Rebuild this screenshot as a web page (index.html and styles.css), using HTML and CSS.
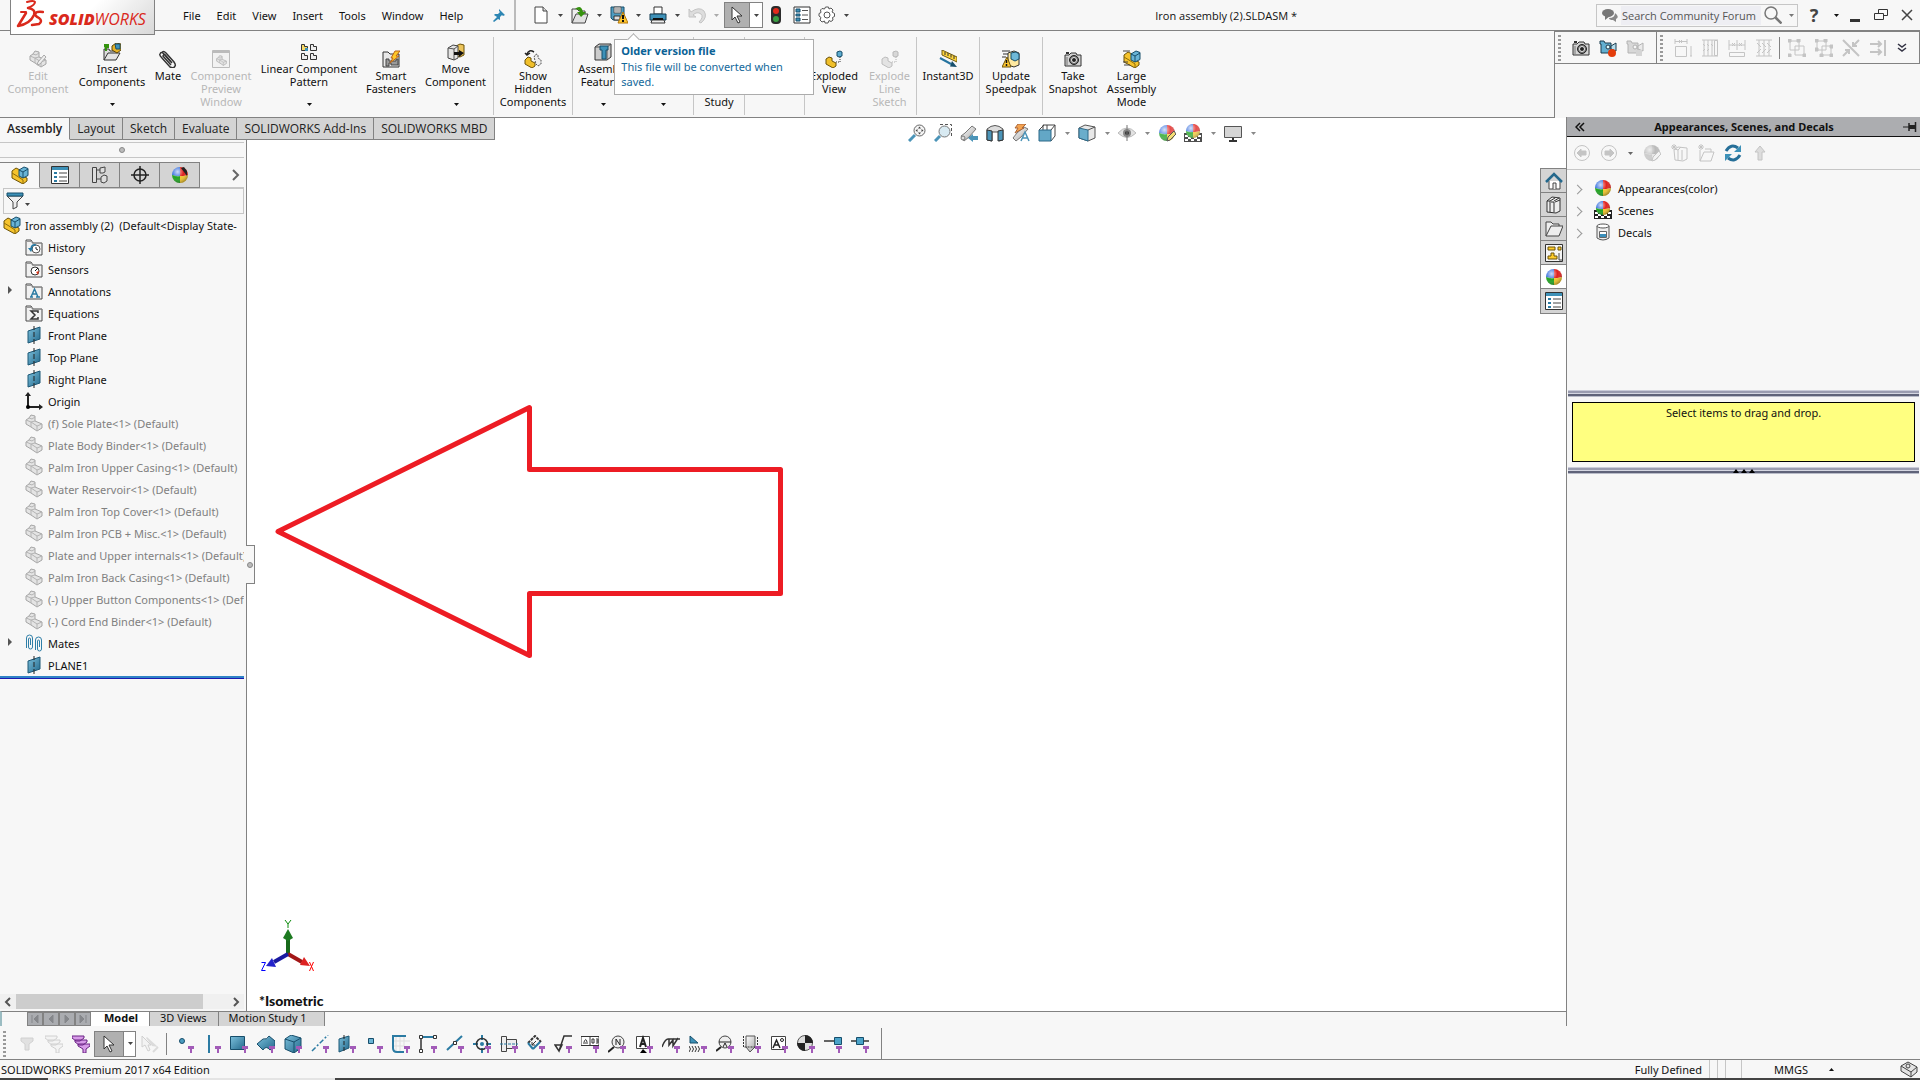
FILE: index.html
```html
<!DOCTYPE html>
<html lang="en">
<head>
<meta charset="utf-8">
<title>Iron assembly (2).SLDASM</title>
<link rel="stylesheet" href="styles.css">
</head>
<body>
<svg class="sprite" aria-hidden="true">
  <defs>
    <linearGradient id="steel" x1="0" y1="0" x2="1" y2="1"><stop offset="0" stop-color="#7cc0dc"/><stop offset="1" stop-color="#23698c"/></linearGradient>
    <linearGradient id="silver" x1="0" y1="0" x2="1" y2="1"><stop offset="0" stop-color="#fff"/><stop offset="1" stop-color="#a8a8a8"/></linearGradient>
    <radialGradient id="shine" cx=".35" cy=".3" r=".75"><stop offset="0" stop-color="#fff" stop-opacity=".75"/><stop offset=".5" stop-color="#fff" stop-opacity="0"/><stop offset="1" stop-color="#000" stop-opacity=".35"/></radialGradient>
  </defs>
  <symbol id="caret" viewBox="0 0 5 3"><path d="M0 0h5L2.500 3z" fill="currentColor"/></symbol>
  <symbol id="funnel" viewBox="0 0 18 18"><path d="M12 11h6v3h-2v4h-2v-4h-2z" fill="#a25bb8"/></symbol>
  <symbol id="ball" viewBox="0 0 18 18"><path d="M9 1a8 8 0 0 0-8 8q4 1.500 8 1z" fill="#3b72e0"/><path d="M9 1a8 8 0 0 1 8 8q-4 1.500-8 1z" fill="#e0221f"/><path d="M1 9a8 8 0 0 0 8 8v-7q-4 .5-8-1z" fill="#22a322"/><path d="M17 9a8 8 0 0 1-8 8v-7q4 .5 8-1z" fill="#f2c52b"/><circle cx="9" cy="9" r="8" fill="url(#shine)"/></symbol>
  <symbol id="scene" viewBox="0 0 18 18"><path d="M0 9h18v9H0z" fill="#222"/><path d="M1 11h3v2H1zM4 13h3v2H4zM1 15h3v2H1zM7 15h3v2H7zM10 13h3v2h-3zM14 11h3v2h-3zM13 15h3v2h-3z" fill="#fff"/><svg x="1" y="-1" width="16" height="16" viewBox="0 0 18 18"><use href="#ball"/></svg></symbol>
  <symbol id="assembly" viewBox="0 0 18 18"><path d="M1 5l4-3 4 2v5l7 3v3l-4 3-11-6z" fill="#f5c32c" stroke="#6b5208" stroke-linejoin="round"/><path d="M1 7l5 3 6 4v4" fill="none" stroke="#8e6c08"/><path d="M8 4l5-3 4 1.500v7L12 12 8 10z" fill="#69b4d6" stroke="#174e6b" stroke-linejoin="round"/><path d="M8 4l4 2 5-3M12 6v6" fill="none" stroke="#174e6b"/></symbol>
  <symbol id="part" viewBox="0 0 18 18"><path d="M1 6l3-2 2-3 4 1v5l7 3v4l-5 3-6-4-5-3z" fill="#e4e4e4" stroke="#a5a5a5" stroke-linejoin="round"/><path d="M1 6l5 2 4-1M6 8v5M12 17v-5l5-2M12 12l-6-4M4 4l3 1 3-2" fill="none" stroke="#b4b4b4"/></symbol>
  <symbol id="plane" viewBox="0 0 18 18"><path d="M3 5l12-4v12L3 17z" fill="url(#steel)" stroke="#1d5877"/><path d="M9 0v4M9 6v5M9 13v5" stroke="#222"/></symbol>
  <symbol id="folder" viewBox="0 0 18 18"><path d="M1 17V2h5l2 3h9v12z" fill="#f1f1f1" stroke="#4b4b4b"/><path d="M1.500 3.500h5l1 2h9" fill="none" stroke="#999"/></symbol>
  <symbol id="cursor" viewBox="0 0 18 18"><path d="M4 1v13l3-3 3 6 2-1-3-6h5z" fill="#fff" stroke="#333" stroke-linejoin="round"/></symbol>
  <symbol id="camera" viewBox="0 0 18 18"><path d="M1 5h4l2-2h5l1 2h4v11H1z" fill="#d5d5d5" stroke="#333"/><path d="M2 3h3" stroke="#333" stroke-width="2"/><circle cx="10" cy="10" r="4.500" fill="#777" stroke="#222"/><circle cx="10" cy="10" r="2.500" fill="#222" stroke="#eee"/><path d="M3 7v8" stroke="#777"/></symbol>
  <symbol id="exploded" viewBox="0 0 18 18"><path d="M1 9l3-2 3 1v3l4 2v3l-3 2-7-4z" fill="#f0bf2b" stroke="#6b5208" stroke-linejoin="round"/><path d="M12 2l3-1 2 1v4l-3 1-2-1z" fill="#5dacd0" stroke="#174e6b"/><path d="M15 7v5h-5" fill="none" stroke="#333" stroke-dasharray="1 1"/></symbol>
  <symbol id="video" viewBox="0 0 18 18"><path d="M1 2h4l1 2h6v10H2V5H1z" fill="#62afd0" stroke="#1b3d4e"/><path d="M12 7l5-3v8l-5-2z" fill="#b4dcec" stroke="#1b3d4e"/><circle cx="9" cy="8" r="2" fill="#dff" stroke="#234"/></symbol>
</svg>

<header class="titlebar">
  <a class="logo" href="#" aria-label="SOLIDWORKS home">
    <svg width="28" height="28" viewBox="0 0 28 28" fill="none" stroke="#da291c" stroke-linecap="round" stroke-linejoin="round"><path d="M11 2q7-2 8 0 0 3-7 6" stroke-width="2"/><path d="M12 8q8 1 6 7Q14 24 2 26L10 13" stroke-width="2.500"/><path d="M5 12h5" stroke-width="2"/><path d="M27 12q-7-1-8 2 0 2 4 4 4 3 0 6l-7 1" stroke-width="2.500"/></svg>
    <span class="wordmark"><b>SOLID</b>WORKS</span>
  </a>
  <nav class="menu"><a href="#">File</a><a href="#">Edit</a><a href="#">View</a><a href="#">Insert</a><a href="#">Tools</a><a href="#">Window</a><a href="#">Help</a></nav>
  <button class="pin" aria-label="Pin menu"><svg width="14" height="14" viewBox="0 0 14 14"><path d="M7 1l6 6-2 1-1-1-2 2v3L6 11l-4 3-1-1 4-4-3-2 1-1h3l2-2-1-1z" fill="#2d86b3"/></svg></button>
  <div class="quick">
    <div class="split"><button aria-label="New"><svg class="ico" viewBox="0 0 18 18"><path d="M3 1h8l4 4v12H3z" fill="#fff" stroke="#444"/><path d="M11 1v4h4" fill="#ddd" stroke="#444"/></svg></button><button class="drop" aria-label="New options"><svg><use href="#caret"/></svg></button></div>
    <div class="split"><button aria-label="Open"><svg class="ico" viewBox="0 0 18 18"><path d="M1 17V3h5l2 2h6v3" fill="#eee" stroke="#444"/><path d="M1 17L5 8h12l-3 9z" fill="#e1e1e1" stroke="#444"/><path d="M4 3q6-5 8 3h3l-5 5-4-5h3q-1-3-5-3z" fill="#35920d"/></svg></button><button class="drop" aria-label="Open options"><svg><use href="#caret"/></svg></button></div>
    <div class="split"><button aria-label="Save"><svg class="ico" viewBox="0 0 18 18"><path d="M1 1h13v13H3l-2-2z" fill="#4d9cc1" stroke="#174f6c"/><path d="M4 1h7v6H4z" fill="#eee" stroke="#555"/><path d="M5 3h5M5 5h5" stroke="#777"/><path d="M4 10h6v4H4z" fill="#ddd" stroke="#333"/><path d="M13 6l5 11H8z" fill="#ffc72e" stroke="#b57707"/><path d="M13 9v4m0 1v2" stroke="#111" stroke-width="2"/></svg></button><button class="drop" aria-label="Save options"><svg><use href="#caret"/></svg></button>
      <div class="tooltip" role="tooltip"><strong>Older version file</strong><p>This file will be converted when saved.</p></div>
    </div>
    <div class="split"><button aria-label="Print"><svg class="ico" viewBox="0 0 18 18"><path d="M5 1h8v7H5z" fill="#fff" stroke="#333"/><path d="M1 8h16v6H1z" fill="#3e91b8" stroke="#123b50"/><path d="M3 14h12l1 3H2z" fill="#eee" stroke="#333"/><path d="M4 13h10" stroke="#111" stroke-width="2"/></svg></button><button class="drop" aria-label="Print options"><svg><use href="#caret"/></svg></button></div>
    <div class="split off"><button aria-label="Undo" disabled><svg class="ico" viewBox="0 0 18 18"><path d="M1 3l2 3q8-6 13-1 4 6-3 12l-2-1q5-5 2-8-4-3-8 1l3 2H1z" fill="#ddd" stroke="#c4c4c4"/></svg></button><button class="drop" aria-label="Undo options" disabled><svg><use href="#caret"/></svg></button></div>
    <div class="split pressed"><button aria-label="Select"><svg class="ico" viewBox="0 0 18 18"><use href="#cursor"/></svg></button><button class="drop" aria-label="Select options"><svg><use href="#caret"/></svg></button></div>
    <button class="tool" aria-label="Rebuild"><svg class="ico" viewBox="0 0 18 18"><rect x="4" y="0" width="10" height="18" rx="4" fill="#2b2b2b"/><circle cx="9" cy="5" r="3" fill="#e32a1c"/><circle cx="9" cy="13" r="3" fill="#3a9f43"/></svg></button>
    <button class="tool" aria-label="File properties"><svg class="ico" viewBox="0 0 18 18"><path d="M1 1h16v16H1z" fill="#fff" stroke="#333"/><path d="M3 3h4v3H3zM3 8h4v2H3zM3 12h4v3H3z" fill="#3a8fb8" stroke="#174f6c"/><path d="M9 4.500h6M9 9h6M9 13.500h6" stroke="#555"/></svg></button>
    <div class="split"><button aria-label="Options"><svg class="ico" viewBox="0 0 18 18" fill="#fff" stroke="#555"><path d="M7.500 1h3l.5 2 2-1 2 2-1 2 2.500 1.500v3L14.500 11.500l.5 2.500-2 1.500-2-1L10 17H7l-.5-2-2.500 1-2-2 1-2.500L1 10V7.500L3 6.500 2.500 4 4 2.500 6.500 3z"/><circle cx="9" cy="9" r="3"/></svg></button><button class="drop" aria-label="Options list"><svg><use href="#caret"/></svg></button></div>
  </div>
  <h1 class="doc-title">Iron assembly (2).SLDASM *</h1>
  <div class="search">
    <svg class="bubble" viewBox="0 0 16 14"><ellipse cx="6" cy="5" rx="6" ry="4" fill="#777"/><path d="M3 7v5l5-4z" fill="#777"/><path d="M13 5q5 4 1 6v3l-3-2q-4 0-4-2 6 0 6-5z" fill="#888"/></svg>
    <input type="text" aria-label="Search Community Forum" placeholder="Search Community Forum">
    <button aria-label="Search"><svg class="ico" viewBox="0 0 18 18" fill="none" stroke="#777"><circle cx="7" cy="7" r="6" stroke-width="1.500"/><path d="M11.500 11.500l6 6" stroke-width="2.500"/></svg></button>
    <button class="drop" aria-label="Search options"><svg><use href="#caret"/></svg></button>
  </div>
  <div class="window-tools">
    <button class="help" aria-label="Help">?</button><button class="drop" aria-label="Help options"><svg><use href="#caret"/></svg></button>
    <button aria-label="Minimize"><svg viewBox="0 0 14 14"><path d="M2 11h10v3H2z" fill="#333"/></svg></button>
    <button aria-label="Restore"><svg viewBox="0 0 14 14" fill="#f7f7f7" stroke="#333"><path d="M4.500 1.500h9v6h-9z"/><path d="M.5 5.500h9v6h-9z"/></svg></button>
    <button aria-label="Close"><svg viewBox="0 0 14 14"><path d="M2 2l10 10M12 2L2 12" stroke="#444" stroke-width="1.500"/></svg></button>
  </div>
</header>

<div class="commands">
  <div class="ribbon">
    <div class="group g-components">
      <button class="cmd" disabled><svg viewBox="0 0 18 18"><use href="#part"/><path d="M8 15l1-3 6-7 2 2-6 7z" fill="#eee" stroke="#aaa"/></svg><span>Edit<br>Component</span></button>
      <button class="cmd menu-cmd"><svg viewBox="0 0 18 18"><path d="M1 17V6h5l1 2h7v2" fill="#ddd" stroke="#333"/><path d="M1 17l4-7h12l-4 7z" fill="#e4e4e4" stroke="#333"/><path d="M2 8V5l-1-1V1h5v4H4v3z" fill="#34930e"/><path d="M9 3l4-3 5 1v6l-4 3-5-3z" fill="#e5b125" stroke="#5c4508"/><path d="M12 1h5v5h-4z" fill="#3f93ba" stroke="#174e6b"/></svg><span>Insert<br>Components</span><svg class="caret"><use href="#caret"/></svg></button>
      <button class="cmd"><svg viewBox="0 0 18 18" fill="none" stroke="#333" stroke-width="1.500"><path d="M13 13L5 4Q2 1 1 4q-1 1 2 4l8 9q4 2 5-1 1-1-1-4L7 3Q4 0 3 3"/><path d="M12 15L4 6q1-3 3 0l5 6"/></svg><span>Mate</span></button>
      <button class="cmd" disabled><svg viewBox="0 0 18 18"><path d="M.5.5h17v17H.5z" fill="#f2f2f2" stroke="#bbb"/><path d="M1 2h16" stroke="#bbb" stroke-width="2"/><svg x="4" y="5" width="11" height="11" viewBox="0 0 18 18"><use href="#part"/></svg></svg><span>Component<br>Preview<br>Window</span></button>
      <button class="cmd menu-cmd"><svg viewBox="0 0 18 18" fill="#eee" stroke="#333"><path d="M1.500 1.500h3v2h3v4h-6z" fill="#f5d967"/><path d="M10.500 1.500h3v2h3v4h-6zM1.500 10.500h3v2h3v4h-6zM10.500 10.500h3v2h3v4h-6z"/><path d="M5 5h3v3H5z" fill="#3c8fb8" stroke="none"/></svg><span>Linear Component<br>Pattern</span><svg class="caret"><use href="#caret"/></svg></button>
      <button class="cmd"><svg viewBox="0 0 18 18"><path d="M1 17V2h5l2 2h9v13z" fill="#e8e8e8" stroke="#333"/><path d="M4 9h3v2h7V9h2v6H9v-2H7v3H4z" fill="#999" stroke="#444"/><path d="M13 1h5l-4 5h3l-9 7 3-5H9z" fill="#ffc928" stroke="#b8621a"/></svg><span>Smart<br>Fasteners</span></button>
      <button class="cmd menu-cmd"><svg viewBox="0 0 18 18"><path d="M9 3l4-2 4 1v10l-4 2-4-1z" fill="#ecc45b" stroke="#6b5208"/><path d="M1 5l5-3 5 1v12l-4 2-6-2z" fill="#e4e4e4" stroke="#444"/><path d="M1 5l6 1 4-3M7 6v11" fill="none" stroke="#555"/><path d="M7 9h5V7l5 3-5 4v-2H7z" fill="#111"/></svg><span>Move<br>Component</span><svg class="caret"><use href="#caret"/></svg></button>
    </div>
    <div class="group g-show">
      <button class="cmd"><svg viewBox="0 0 18 18"><path d="M1 10l3-3 3 1v3l4 2v3l-3 2-7-4z" fill="#f0bf2b" stroke="#6b5208"/><path d="M10 7l2-3 2 1v3l3 2v4l-3 2-2-2z" fill="#eee" stroke="#555" stroke-dasharray="2 1"/><path d="M10 2Q5-1 3 4M1 3l2 2 3-2" fill="none" stroke="#222" stroke-width="1.500"/></svg><span>Show<br>Hidden<br>Components</span></button>
    </div>
    <div class="group g-features">
      <button class="cmd menu-cmd"><svg viewBox="0 0 18 18"><path d="M1 4l4-3h12v13l-4 3H1z" fill="#ccc" stroke="#333"/><path d="M1 4h12v13M13 4l4-3" fill="none" stroke="#555"/><path d="M6 3h8v4h-2v9H8V7H6z" fill="#3d91b8" stroke="#174e6b"/></svg><span>Assembly<br>Features</span><svg class="caret"><use href="#caret"/></svg></button>
      <button class="cmd menu-cmd" aria-label="Reference Geometry"><svg viewBox="0 0 18 18"><use href="#plane"/></svg><svg class="caret"><use href="#caret"/></svg></button>
    </div>
    <div class="group g-study"><button class="cmd third-line" aria-label="New Motion Study"><span>Study</span></button></div>
    <div class="group g-bom"><button class="cmd menu-cmd" aria-label="Bill of Materials"><svg viewBox="0 0 18 18"><path d="M1 1h16v16H1zM1 6h16M1 11h16M6 1v16" fill="#fff" stroke="#444"/></svg></button></div>
    <div class="group g-explode">
      <button class="cmd"><svg viewBox="0 0 18 18"><use href="#exploded"/></svg><span>Exploded<br>View</span></button>
      <button class="cmd" disabled><svg class="grey" viewBox="0 0 18 18"><use href="#exploded"/></svg><span>Explode<br>Line<br>Sketch</span></button>
    </div>
    <div class="group g-single"><button class="cmd"><svg viewBox="0 0 18 18"><path d="M3 0l15 7v5L3 5z" fill="#ffd63c" stroke="#705a10"/><path d="M6 2v3M9 3v3M12 4.500v3M15 6v3" stroke="#333"/><path d="M1 8l11 6" stroke="#2674a0" stroke-width="2"/><path d="M13 11l5 6-7-.5z" fill="#174e6b"/></svg><span>Instant3D</span></button></div>
    <div class="group g-single"><button class="cmd"><svg viewBox="0 0 18 18"><path d="M6 3l6-2 5 2v12l-5 2-6-2z" fill="#ffe9a0" stroke="#333"/><path d="M9 3l5-1 3 2v5l-4 2-4-2z" fill="#6fb9d8" stroke="#174e6b"/><path d="M0 1h8M1 4h5M0 7h4" stroke="#333"/><path d="M5 7l4 10H0z" fill="#ffc72e" stroke="#6b5208"/><path d="M4.500 10v3m0 1v2" stroke="#111" stroke-width="1.500"/></svg><span>Update<br>Speedpak</span></button></div>
    <div class="group g-snapshot">
      <button class="cmd"><svg viewBox="0 0 18 18"><use href="#camera"/></svg><span>Take<br>Snapshot</span></button>
      <button class="cmd"><svg viewBox="0 0 18 18"><use href="#assembly"/><path d="M0 1h7M0 12h5M1 15h6" stroke="#444"/></svg><span>Large<br>Assembly<br>Mode</span></button>
    </div>
  </div>
  <div class="side-bars">
    <div class="bar bar-capture"><i class="grip"></i>
      <button aria-label="Screen capture"><svg class="ico" viewBox="0 0 18 18"><use href="#camera"/></svg></button>
      <button aria-label="Record video"><svg class="ico" viewBox="0 0 18 18"><use href="#video"/><circle cx="13" cy="14" r="4" fill="#e43d0c"/></svg></button>
      <button aria-label="Stop video" disabled><svg class="ico grey" viewBox="0 0 18 18"><use href="#video"/><path d="M10 11h6v6h-6z" fill="#999"/></svg></button>
    </div>
    <div class="bar bar-align"><i class="grip"></i>
      <button aria-label="Auto arrange" disabled><svg class="ico line" viewBox="0 0 18 18"><path d="M1.500 7.500h11v10h-11zM1 2.500h12M1 0v5M13 0v5M16 8h2M16 17h2M17 9v8" /><path d="M5 1l3 3M8 1L5 4"/></svg></button>
      <button aria-label="Space evenly" disabled><svg class="ico line" viewBox="0 0 18 18"><path d="M1 1h16M1 17h16M3 1v16M7 1v16M11 1v16M13.500 1.500h3v15h-3zM2 5l2 2M6 5l2 2M10 5l2 2M2 12l2-2M6 12l2-2"/></svg></button>
      <button aria-label="Align collinear" disabled><svg class="ico line" viewBox="0 0 18 18"><path d="M1 1v10M9 1v10M17 1v10M1 6h16M1.500 13.500h15v4h-15zM4 4l3 3M7 4L4 7M11 4l3 3M14 4l-3 3"/></svg></button>
      <button aria-label="Align stagger" disabled><svg class="ico line" viewBox="0 0 18 18"><path d="M1 1h16M1 17h16M4 1v16M9 1v16M14 1v16M2 4l4 4M7 4l4 4M12 4l4 4M2 14l4-4M7 14l4-4M12 14l4-4"/></svg></button>
      <i class="divider"></i>
      <button aria-label="Group" disabled><svg class="ico line" viewBox="0 0 18 18"><path d="M2 2h9v9H2zM7 7h9v9H7z"/><path d="M0 0h3v3H0zM9 0h3v3H9zM0 15h3v3H0zM15 15h3v3h-3z" fill="#c4c4c4"/></svg></button>
      <button aria-label="Ungroup" disabled><svg class="ico line" viewBox="0 0 18 18"><path d="M2 2h9v9H2zM7 7h9v9H7z"/><path d="M0 0h3v3H0zM9 0h3v3H9zM0 9h3v3H0zM5 15h3v3H5zM15 6h3v3h-3zM15 15h3v3h-3z" fill="#c4c4c4"/></svg></button>
      <button aria-label="Align to line" disabled><svg class="ico line" viewBox="0 0 18 18"><path d="M1 1l16 16M17 1l-6 6M11 3v4h4M1 17l6-6M3 11h4v4" stroke-width="2"/></svg></button>
      <button aria-label="Align right" disabled><svg class="ico line" viewBox="0 0 18 18"><path d="M16 1v16M1 5h10M9 2l3 3-3 3M1 13h10M9 10l3 3-3 3" stroke-width="2"/></svg></button>
      <button class="more" aria-label="More tools"><svg viewBox="0 0 10 10" fill="none" stroke="#334" stroke-width="1.500"><path d="M1 1l4 3 4-3M1 5l4 3 4-3"/></svg></button>
    </div>
  </div>
</div>

<div class="workspace">
  <main class="document">
    <nav class="cm-tabs"><button class="on">Assembly</button><button>Layout</button><button>Sketch</button><button>Evaluate</button><button>SOLIDWORKS Add-Ins</button><button>SOLIDWORKS MBD</button></nav>
    <div class="stage">
      <aside class="manager">
        <div class="flyout-bar"><i class="knob"></i></div>
        <div class="pane-tabs">
          <button class="on" aria-label="Feature tree"><svg class="ico" viewBox="0 0 18 18"><use href="#assembly"/></svg></button>
          <button aria-label="Properties"><svg class="ico" viewBox="0 0 18 18"><path d="M.5.5h17v17H.5z" fill="#fff" stroke="#333"/><path d="M1 1h16v3H1z" fill="#3d91b8"/><path d="M3 6h3v2H3zM3 10h3v2H3zM3 14h3v2H3z" fill="#2b7ba3"/><path d="M8 7h8M8 11h8M8 15h8" stroke="#444"/></svg></button>
          <button aria-label="Configurations"><svg class="ico" viewBox="0 0 18 18" fill="#ddd" stroke="#444"><path d="M3 4h7M3 13h7" fill="none"/><path d="M1.500 1.500h4v15h-4zM9 2l5-1v5l-2 1H9zM10 11l3-2 3 1v5l-3 2-3-1z"/></svg></button>
          <button aria-label="Dimensions"><svg class="ico" viewBox="0 0 18 18" fill="none" stroke="#222" stroke-width="1.500"><circle cx="9" cy="9" r="6"/><path d="M9 0v18M0 9h18"/></svg></button>
          <button aria-label="Display"><svg class="ico" viewBox="0 0 18 18"><use href="#ball"/><path d="M10 2l3-1 3 4v5z" fill="#222"/></svg></button>
          <button class="next" aria-label="More panes"><svg width="8" height="12" viewBox="0 0 8 12"><path d="M1 1l5 5-5 5" fill="none" stroke="#666" stroke-width="2"/></svg></button>
        </div>
        <div class="filter"><svg class="ico" viewBox="0 0 18 18"><path d="M1 4l6 6v7l4-2v-5l6-6z" fill="#eee" stroke="#444"/><path d="M1 1h16v3H1z" fill="#3d91b8" stroke="#174e6b"/></svg><svg class="caret"><use href="#caret"/></svg><input type="text" aria-label="Filter tree"></div>
        <ul class="tree">
          <li class="root"><svg class="ico"><use href="#assembly"/></svg>Iron assembly (2)&nbsp; (Default&lt;Display State-</li>
          <li><svg class="ico" viewBox="0 0 18 18"><use href="#folder"/><circle cx="11" cy="11" r="4" fill="#fff" stroke="#555"/><path d="M11 9v2l2 1" fill="none" stroke="#222"/><path d="M3 10h5l-2 4z" fill="#247aa5"/><path d="M6 10q1-4 5-3" fill="none" stroke="#247aa5" stroke-width="1.500"/></svg>History</li>
          <li><svg class="ico" viewBox="0 0 18 18"><use href="#folder"/><circle cx="10" cy="11" r="4" fill="#fff" stroke="#333"/><path d="M10 11l3-3" stroke="#111"/><path d="M11 12l3-1-1 4z" fill="#e33b1c"/></svg>Sensors</li>
          <li class="parent"><svg class="ico" viewBox="0 0 18 18"><use href="#folder"/><path d="M6 15l3.500-8 3.500 8M7 12h5M5 15h3M11 15h4" fill="none" stroke="#2b7ba3" stroke-width="1.500"/></svg>Annotations</li>
          <li><svg class="ico" viewBox="0 0 18 18"><use href="#folder"/><path d="M13 9V7H6l4 4-4 4h7v-2" fill="none" stroke="#333" stroke-width="1.500"/></svg>Equations</li>
          <li><svg class="ico"><use href="#plane"/></svg>Front Plane</li>
          <li><svg class="ico"><use href="#plane"/></svg>Top Plane</li>
          <li><svg class="ico"><use href="#plane"/></svg>Right Plane</li>
          <li><svg class="ico" viewBox="0 0 18 18"><path d="M3 3v12h12" fill="none" stroke="#222" stroke-width="2"/><path d="M0 4l3-4 3 4zM14 12l4 3-4 3z" fill="#222"/><circle cx="3" cy="15" r="2"/></svg>Origin</li>
          <li class="hidden-part"><svg class="ico"><use href="#part"/></svg>(f) Sole Plate&lt;1&gt; (Default)</li>
          <li class="hidden-part"><svg class="ico"><use href="#part"/></svg>Plate Body Binder&lt;1&gt; (Default)</li>
          <li class="hidden-part"><svg class="ico"><use href="#part"/></svg>Palm Iron Upper Casing&lt;1&gt; (Default)</li>
          <li class="hidden-part"><svg class="ico"><use href="#part"/></svg>Water Reservoir&lt;1&gt; (Default)</li>
          <li class="hidden-part"><svg class="ico"><use href="#part"/></svg>Palm Iron Top Cover&lt;1&gt; (Default)</li>
          <li class="hidden-part"><svg class="ico"><use href="#part"/></svg>Palm Iron PCB + Misc.&lt;1&gt; (Default)</li>
          <li class="hidden-part"><svg class="ico"><use href="#part"/></svg>Plate and Upper internals&lt;1&gt; (Default)</li>
          <li class="hidden-part"><svg class="ico"><use href="#part"/></svg>Palm Iron Back Casing&lt;1&gt; (Default)</li>
          <li class="hidden-part"><svg class="ico"><use href="#part"/></svg>(-) Upper Button Components&lt;1&gt; (Default)</li>
          <li class="hidden-part"><svg class="ico"><use href="#part"/></svg>(-) Cord End Binder&lt;1&gt; (Default)</li>
          <li class="parent"><svg class="ico" viewBox="0 0 18 18" fill="none" stroke="#2f7fa8"><path d="M1.500 14V4q0-3 3-3t3 3v9q0 2-2 2t-2-2V5q0-1 1-1t1 1v6M10.500 16V6q0-3 3-3t3 3v9q0 2-2 2t-2-2V7q0-1 1-1t1 1v6"/></svg>Mates</li>
          <li><svg class="ico"><use href="#plane"/></svg>PLANE1</li>
        </ul>
        <div class="rollback"></div>
        <div class="hscroll"><button aria-label="Scroll left"><svg viewBox="0 0 8 10"><path d="M6 1L2 5l4 4" fill="none" stroke="#555" stroke-width="2"/></svg></button><span class="track"><i class="thumb"></i></span><button aria-label="Scroll right"><svg viewBox="0 0 8 10"><path d="M2 1l4 4-4 4" fill="none" stroke="#555" stroke-width="2"/></svg></button></div>
      </aside>
      <section class="canvas" aria-label="Graphics area">
        <button class="collapse" aria-label="Collapse tree"><i class="knob"></i></button>
        <div class="headsup">
          <button aria-label="Zoom to fit"><svg class="ico" viewBox="0 0 18 18"><path d="M1 17l6-6" stroke="#4b94b8" stroke-width="3"/><circle cx="11.500" cy="6.500" r="5.500" fill="#f4f4f4" stroke="#666"/><path d="M10 4.500l1.500-2 1.500 2zM10 8.500l1.500 2 1.500-2zM9.500 5l-2 1.500 2 1.500zM13.500 5l2 1.500-2 1.500z" fill="#444"/></svg></button>
          <button aria-label="Zoom to area"><svg class="ico" viewBox="0 0 18 18"><path d="M6 .5h11.500v12" fill="none" stroke="#555" stroke-dasharray="3 2"/><path d="M1 17l5-5" stroke="#4b94b8" stroke-width="3"/><circle cx="10.500" cy="7.500" r="5.500" fill="#d8eaf2" stroke="#777"/></svg></button>
          <button aria-label="Previous view"><svg class="ico" viewBox="0 0 18 18"><path d="M1 12l4-3 7-7 4 3-7 8-5 4z" fill="url(#silver)" stroke="#777"/><circle cx="3" cy="14" r="2" fill="#ddd" stroke="#777"/><path d="M8 14l5-4v2h5v4h-5v2z" fill="#4b94b8"/></svg></button>
          <button aria-label="Section view"><svg class="ico" viewBox="0 0 18 18"><path d="M1 5q8-7 16 0v11l-4 1V8H6v9l-5-1z" fill="#ddd" stroke="#555"/><path d="M1 6l5 1v10l-5-1zM12 7l5-1v10l-5 1z" fill="#4b94b8" stroke="#333"/></svg></button>
          <button aria-label="Dynamic annotation views"><svg class="ico" viewBox="0 0 18 18"><path d="M1 14l4-5 7-6 4 2-7 8-5 4z" fill="url(#silver)" stroke="#777"/><path d="M6 0h8l-4 4h2L3 9l3-5H3z" fill="#f4a350" stroke="#a96538"/><path d="M9 17l4-9 4 9M10 14h6" fill="none" stroke="#4b94b8" stroke-width="1.500"/></svg></button>
          <div class="pair"><button aria-label="View orientation"><svg class="ico" viewBox="0 0 18 18"><path d="M5 1h12v11M1 6l5-5M13 6l4-5M13 17l4-5M5 1v5M9 1v5" fill="none" stroke="#444"/><path d="M1 6h12v11H1z" fill="#63a7c6" stroke="#2d6988"/></svg></button><button class="drop" aria-label="Orientation list"><svg><use href="#caret"/></svg></button></div>
          <div class="pair"><button aria-label="Display style"><svg class="ico" viewBox="0 0 18 18"><path d="M1 4l6-3 10 2v11l-7 3-9-3z" fill="#e8e8e8" stroke="#555"/><path d="M1 4l9 2v11l-9-3z" fill="#6aadcb" stroke="#2d6988"/><path d="M10 6l7-3" stroke="#555"/></svg></button><button class="drop" aria-label="Display style list"><svg><use href="#caret"/></svg></button></div>
          <div class="pair"><button aria-label="Hide/show items"><svg class="ico" viewBox="0 0 18 18"><path d="M0 9q9-10 18 0-9 9-18 0z" fill="#e2e2e2" stroke="#bbb"/><circle cx="9" cy="9" r="4" fill="#888"/><circle cx="9" cy="9" r="2" fill="#333"/><path d="M9 1v16" stroke="#777"/></svg></button><button class="drop" aria-label="Hide/show list"><svg><use href="#caret"/></svg></button></div>
          <button aria-label="Edit appearance"><svg class="ico" viewBox="0 0 18 18"><use href="#ball" opacity=".8"/><path d="M9 17l1-4 6-6 2 3-6 6z" fill="#f5dd74" stroke="#555"/></svg></button>
          <div class="pair"><button aria-label="Apply scene"><svg class="ico"><use href="#scene" opacity=".8"/></svg></button><button class="drop" aria-label="Scene list"><svg><use href="#caret"/></svg></button></div>
          <div class="pair"><button aria-label="View settings"><svg class="ico" viewBox="0 0 18 18"><path d="M.5 2.500h17v11H.5z" fill="#d5d5d5" stroke="#555"/><path d="M9 14v3M5 17h8" stroke="#333" stroke-width="2"/></svg></button><button class="drop" aria-label="View settings list"><svg><use href="#caret"/></svg></button></div>
        </div>
        <svg class="big-arrow" viewBox="0 0 520 260" aria-hidden="true"><path d="M6 131.500L257.500 7.500v62h251v124h-251v62z" fill="none" stroke="#ed1c24" stroke-width="5" stroke-linejoin="round"/></svg>
        <svg class="triad" viewBox="0 0 60 60" aria-label="Axis triad"><path d="M30 35V17" stroke="#17691a" stroke-width="4"/><path d="M30 10l5 9-5 3-5-3z" fill="#1d7a20"/><path d="M30 35l14 8" stroke="#a31717" stroke-width="4"/><path d="M52 47l-10-1 4-8z" fill="#d22"/><path d="M30 35l-14 8" stroke="#1a1aa0" stroke-width="4"/><path d="M8 47l10 1-4-9z" fill="#22c"/><path d="M27 1l3 4 3-4M30 5v4" fill="none" stroke="#0a8a0a"/><path d="M3.500 43.500h4l-4 8h4" fill="none" stroke="#00f"/><path d="M51.500 43l4 9M55.500 43l-4 9" stroke="#f00"/></svg>
        <p class="view-name">*Isometric</p>
        <nav class="pane-rail">
          <button aria-label="Resources"><svg class="ico" viewBox="0 0 18 18"><path d="M4 9v8h11V9" fill="#fff" stroke="#444"/><path d="M8 17v-6h3v6" fill="#eee" stroke="#444"/><path d="M1 10l8-8 8 8" fill="none" stroke="#24688c" stroke-width="2.500"/></svg></button>
          <button aria-label="Design library"><svg class="ico" viewBox="0 0 18 18" fill="#eee" stroke="#333"><path d="M2 5l5-4 8 1v13l-4 2-9-1zM2 5h3v11M5 5l5-3M6 6h3v10M9 5l5-3M10 6l5-2"/></svg></button>
          <button aria-label="File explorer"><svg class="ico" viewBox="0 0 18 18" fill="#eee" stroke="#444"><path d="M1 16V2h5l2 2h6v3"/><path d="M1 16l5-10h12l-4 10z"/></svg></button>
          <button aria-label="View palette"><svg class="ico" viewBox="0 0 18 18"><path d="M.5.5h17v17H.5z" fill="#f5f5f5" stroke="#333"/><path d="M3 3h7v3H3zM13 3h3v3h-3zM6 9h3v3h3v3H3v-3h3z" fill="#ffcc2a" stroke="#6b5208"/><path d="M14 9v7h3" fill="none" stroke="#444"/></svg></button>
          <button class="on" aria-label="Appearances"><svg class="ico"><use href="#ball"/></svg></button>
          <button aria-label="Custom properties"><svg class="ico" viewBox="0 0 18 18"><path d="M.5.5h17v17H.5z" fill="#fff" stroke="#333"/><path d="M1 1h16v3H1z" fill="#3d91b8"/><path d="M3 6h3v2H3zM3 10h3v2H3zM3 14h3v2H3z" fill="#2b7ba3"/><path d="M8 7h8M8 11h8M8 15h8" stroke="#444"/></svg></button>
        </nav>
      </section>
    </div>
    <div class="model-bar">
      <div class="steps">
        <button aria-label="First tab"><svg viewBox="0 0 10 10"><path d="M2 1v8M8 1L4 5l4 4z"/></svg></button><button aria-label="Previous tab"><svg viewBox="0 0 10 10"><path d="M7 1L3 5l4 4z"/></svg></button><button aria-label="Next tab"><svg viewBox="0 0 10 10"><path d="M3 1l4 4-4 4z"/></svg></button><button aria-label="Last tab"><svg viewBox="0 0 10 10"><path d="M8 1v8M2 1l4 4-4 4z"/></svg></button>
      </div>
      <button class="on">Model</button><button>3D Views</button><button>Motion Study 1</button>
    </div>
  </main>

  <aside class="task-pane">
    <header><button aria-label="Collapse pane"><svg width="10" height="10" viewBox="0 0 10 10"><path d="M5 1L1 5l4 4M9 1L5 5l4 4" fill="none" stroke="#111" stroke-width="1.500"/></svg></button><h2>Appearances, Scenes, and Decals</h2><button aria-label="Pin pane"><svg width="14" height="10" viewBox="0 0 14 10"><path d="M0 5h6" stroke="#222"/><path d="M6 1v8M12.500 0v10" stroke="#222" stroke-width="1.500"/><path d="M6 3h7v4H6z" fill="#222"/></svg></button></header>
    <div class="pane-tools">
      <button aria-label="Back" disabled><svg class="ico line" viewBox="0 0 18 18"><circle cx="9" cy="9" r="7.500"/><path d="M4 9l4-4v2h5v4H8v2z" fill="#c4c4c4"/></svg></button>
      <button aria-label="Forward" disabled><svg class="ico line" viewBox="0 0 18 18"><circle cx="9" cy="9" r="7.500"/><path d="M14 9l-4-4v2H5v4h5v2z" fill="#c4c4c4"/></svg></button>
      <button class="drop" aria-label="History list"><svg><use href="#caret"/></svg></button>
      <button aria-label="Edit appearance" disabled><svg class="ico grey" viewBox="0 0 18 18"><use href="#ball"/><path d="M9 17l1-4 6-6 2 3-6 6z" fill="#eee" stroke="#666"/></svg></button>
      <button aria-label="Add library" disabled><svg class="ico line" viewBox="0 0 18 18"><path d="M4 6l4-3 9 1v11l-4 2-8-1zM8 6v10M12 6v10M5 5l3 1 3-3M1 3h6M4 0v6M2 1l4 4M6 1L2 5"/></svg></button>
      <button aria-label="Add folder" disabled><svg class="ico line" viewBox="0 0 18 18"><path d="M3 6v11h11l3-9H7l-4 9M8 5h6v3M1 3h6M4 0v6M2 1l4 4M6 1L2 5"/></svg></button>
      <button aria-label="Refresh"><svg class="ico" viewBox="0 0 18 18" fill="none" stroke="#266f98" stroke-width="3"><path d="M2 7q5-8 12-3M16 11q-5 8-12 3"/><path d="M17 1v7h-7zM1 17v-7h7z" fill="#3d91b8" stroke="none"/></svg></button>
      <button aria-label="Up" disabled><svg class="ico line" viewBox="0 0 18 18"><path d="M9 2l5 6h-3v8H7V8H4z" fill="#ddd"/></svg></button>
    </div>
    <ul class="library">
      <li><svg class="ico"><use href="#ball"/></svg>Appearances(color)</li>
      <li><svg class="ico"><use href="#scene"/></svg>Scenes</li>
      <li><svg class="ico" viewBox="0 0 18 18"><path d="M3 3v12q6 4 12 0V3" fill="#eee" stroke="#555"/><ellipse cx="9" cy="3" rx="6" ry="2" fill="#fff" stroke="#555"/><path d="M5.500 8.500h7v6h-7z" fill="#fff" stroke="#666"/><path d="M6 11h6v3H6z" fill="#3b90bc"/></svg>Decals</li>
    </ul>
    <div class="splitter"></div>
    <p class="drop-zone">Select items to drag and drop.</p>
    <div class="splitter"><svg width="22" height="4" viewBox="0 0 22 4"><path d="M0 4l3-4 3 4zM8 4l3-4 3 4zM16 4l3-4 3 4z"/></svg></div>
  </aside>
</div>

<div class="filter-bar">
  <i class="grip"></i>
  <button aria-label="Toggle filters" disabled><svg class="ico grey" viewBox="0 0 18 18"><path d="M3 3h12v3l-4 3v6H7V9L3 6z" fill="#bbb" stroke="#888"/></svg></button>
  <button aria-label="Clear filters" disabled><svg class="ico grey" viewBox="0 0 18 18" fill="#eee" stroke="#888"><path d="M0 1h12v2L8 6H4L0 3zM3 5h12v2l-4 3H7L3 7zM6 9h12v2l-4 3v4h-3v-4l-5-3z"/></svg></button>
  <button aria-label="Select all filters"><svg class="ico" viewBox="0 0 18 18" fill="#d79be8" stroke="#6a2384"><path d="M0 1h12v2L8 6H4L0 3zM3 5h12v2l-4 3H7L3 7zM6 9h12v2l-4 3v4h-3v-4l-5-3z"/></svg></button>
  <div class="split pressed wide"><button aria-label="Select"><svg class="ico"><use href="#cursor"/></svg></button><button class="drop" aria-label="Select options"><svg><use href="#caret"/></svg></button></div>
  <button aria-label="Invert selection" disabled><svg class="ico grey" viewBox="0 0 18 18"><path d="M1 1v11l3-2 3 6 2-1-2-5h3z" fill="#eee" stroke="#888"/><path d="M6 2l11 10-6-1-6-8z" fill="#aaa"/><path d="M12 17l5-5" stroke="#aaa" stroke-width="2"/></svg></button>
  <i class="divider"></i>
  <button aria-label="Filter vertices"><svg class="ico" viewBox="0 0 18 18"><circle cx="6" cy="6" r="2.500" fill="#4b9cc0" stroke="#174e6b"/><use href="#funnel"/></svg></button>
  <button aria-label="Filter edges"><svg class="ico" viewBox="0 0 18 18"><path d="M6 0v18" stroke="#2b7ba3" stroke-width="2"/><use href="#funnel"/></svg></button>
  <button aria-label="Filter faces"><svg class="ico" viewBox="0 0 18 18"><path d="M.5 1.500h14v13H.5z" fill="url(#steel)" stroke="#174e6b"/><use href="#funnel"/></svg></button>
  <button aria-label="Filter surface bodies"><svg class="ico" viewBox="0 0 18 18"><path d="M0 9l6-5q4 1 6-3l6 5v5l-5 4q-4-5-7 0z" fill="url(#steel)" stroke="#174e6b"/><use href="#funnel"/></svg></button>
  <button aria-label="Filter solid bodies"><svg class="ico" viewBox="0 0 18 18"><path d="M1 4l6-4 10 3v10l-7 5-9-4z" fill="url(#steel)" stroke="#174e6b"/><path d="M1 4l9 3v11M10 7l7-4" fill="none" stroke="#174e6b"/><use href="#funnel"/></svg></button>
  <button aria-label="Filter axes"><svg class="ico" viewBox="0 0 18 18"><path d="M1 16L17 0" stroke="#2b7ba3" stroke-width="1.500" stroke-dasharray="5 2 2 2"/><use href="#funnel"/></svg></button>
  <button aria-label="Filter planes"><svg class="ico" viewBox="0 0 18 18"><path d="M1 4l10-3v12L1 17z" fill="url(#steel)" stroke="#1d5877"/><path d="M6 0v18" stroke="#222" stroke-dasharray="4 2"/><use href="#funnel"/></svg></button>
  <button aria-label="Filter sketch points"><svg class="ico" viewBox="0 0 18 18"><path d="M3.500 3.500h5v5h-5z" fill="#6ab4d6" stroke="#174e6b"/><use href="#funnel"/></svg></button>
  <button aria-label="Filter sketches"><svg class="ico" viewBox="0 0 18 18"><path d="M4 1v17M8 1v17M12 1v10M0 6h18M0 11h12" stroke="#ddd"/><path d="M14 1H1v12q0 4 4 4h7" fill="none" stroke="#2b7ba3" stroke-width="2"/><use href="#funnel"/></svg></button>
  <button aria-label="Filter sketch segments"><svg class="ico" viewBox="0 0 18 18"><path d="M2 2v14" stroke="#333" stroke-width="1.500"/><path d="M2 2h14" stroke="#2b7ba3" stroke-width="2"/><path d="M.5.5h3v3h-3zM.5 14.500h3v3h-3zM14.500.5h3v3h-3z" fill="#fff" stroke="#333"/><use href="#funnel"/></svg></button>
  <button aria-label="Filter midpoints"><svg class="ico" viewBox="0 0 18 18"><path d="M1 15L16 1" stroke="#2b7ba3" stroke-width="2"/><path d="M7.500 6.500h3v3h-3z" fill="#fff" stroke="#333"/><use href="#funnel"/></svg></button>
  <button aria-label="Filter center marks"><svg class="ico" viewBox="0 0 18 18"><path d="M9 0v5M9 13v5M0 9h5M13 9h5" stroke="#2b7ba3" stroke-width="2"/><circle cx="9" cy="9" r="5.500" fill="none" stroke="#333" stroke-width="1.500"/><circle cx="9" cy="9" r="2" fill="#2b7ba3"/><use href="#funnel"/></svg></button>
  <button aria-label="Filter centerlines"><svg class="ico" viewBox="0 0 18 18"><path d="M1.500 1.500h5v15h-5zM6.500 4.500h10v9h-10z" fill="#eee" stroke="#444"/><path d="M0 9h18" stroke="#2b7ba3" stroke-dasharray="3 1"/><use href="#funnel"/></svg></button>
  <button aria-label="Filter dimensions"><svg class="ico" viewBox="0 0 18 18"><path d="M1 8l7-7 6 6" fill="none" stroke="#333" stroke-width="2" stroke-dasharray="3 1"/><path d="M6 14l7-7M1 8l5 6" stroke="#2b7ba3" stroke-width="2"/><path d="M5 10l4-4M5 7v3h3" fill="none" stroke="#333"/><use href="#funnel"/></svg></button>
  <button aria-label="Filter surface finish"><svg class="ico" viewBox="0 0 18 18"><path d="M1 10h7l-3 6zl4 6 5-15h8" fill="none" stroke="#333" stroke-width="1.500"/><use href="#funnel"/></svg></button>
  <button aria-label="Filter geometric tolerances"><svg class="ico" viewBox="0 0 18 18"><path d="M0 1.500h18v9H0zM9 1v10" fill="#fff" stroke="#333"/><path d="M2 8h5M3 7q2-5 3 0M11 4h2v4h-2zM15 4h2v4h-2M15 6h2" fill="none" stroke="#333"/><use href="#funnel"/></svg></button>
  <button aria-label="Filter notes"><svg class="ico" viewBox="0 0 18 18"><circle cx="10" cy="7" r="6" fill="#eee" stroke="#444"/><path d="M8 10V4l4 6V4" fill="none" stroke="#222"/><path d="M0 17l6-5" stroke="#222" stroke-width="2"/><use href="#funnel"/></svg></button>
  <button aria-label="Filter datums"><svg class="ico" viewBox="0 0 18 18"><path d="M1.500 1.500h13v12h-13z" fill="#fff" stroke="#444"/><path d="M5 12l3-9 3 9M6 9h4" fill="none" stroke="#222" stroke-width="2"/><path d="M5 18l3-4 4 4z"/><use href="#funnel"/></svg></button>
  <button aria-label="Filter welds"><svg class="ico" viewBox="0 0 18 18"><path d="M0 12q3-8 6-8h12M7 4v6l4-5v6l5-8" fill="none" stroke="#333" stroke-width="1.500"/><use href="#funnel"/></svg></button>
  <button aria-label="Filter weld beads"><svg class="ico" viewBox="0 0 18 18"><path d="M1 1v7h8z" fill="#3d91b8" stroke="#174e6b"/><path d="M0 11q3 3 0 6M3 11q3 3 0 6M6 11q3 3 0 6M9 11q3 3 0 6" fill="none" stroke="#333"/><use href="#funnel"/></svg></button>
  <button aria-label="Filter datum targets"><svg class="ico" viewBox="0 0 18 18"><circle cx="9" cy="7" r="6" fill="#eee" stroke="#444"/><path d="M3 7h12M7 12l2-4 2 4" fill="none" stroke="#222"/><path d="M0 16l5-4" stroke="#222" stroke-width="2"/><use href="#funnel"/></svg></button>
  <button aria-label="Filter cosmetic threads"><svg class="ico" viewBox="0 0 18 18"><path d="M3 1h9v11l-5 5-4-5z" fill="url(#silver)" stroke="#555"/><path d="M.5 1v11h14V1" fill="none" stroke="#333" stroke-dasharray="2 1"/><use href="#funnel"/></svg></button>
  <button aria-label="Filter blocks"><svg class="ico" viewBox="0 0 18 18"><path d="M1.500 1.500h14v13h-14z" fill="#fff" stroke="#444"/><path d="M3 13l3.500-8L10 13M5 10h4" fill="none" stroke="#222" stroke-width="1.500"/><circle cx="12" cy="5" r="1.500" fill="none" stroke="#222"/><use href="#funnel"/></svg></button>
  <button aria-label="Filter center of mass"><svg class="ico" viewBox="0 0 18 18"><circle cx="8" cy="8" r="7.500" fill="#ddd" stroke="#555"/><path d="M8 0a8 8 0 0 1 8 8H8v8a8 8 0 0 1-8-8h8z" fill="#222"/><use href="#funnel"/></svg></button>
  <button aria-label="Filter connection points"><svg class="ico" viewBox="0 0 18 18"><path d="M0 6h11" stroke="#333" stroke-width="1.500"/><path d="M10.500 2.500h7v7h-7z" fill="#4ba3c9" stroke="#174e6b"/><use href="#funnel"/></svg></button>
  <button aria-label="Filter routing points"><svg class="ico" viewBox="0 0 18 18"><path d="M0 6h18" stroke="#333" stroke-width="1.500"/><path d="M5.500 2.500h7v7h-7z" fill="#4ba3c9" stroke="#174e6b"/><use href="#funnel"/></svg></button>
  <i class="divider end"></i>
</div>

<footer class="status">
  <span class="edition">SOLIDWORKS Premium 2017 x64 Edition</span>
  <span class="state">Fully Defined</span>
  <i class="cell"></i><i class="cell"></i><i class="cell wide-cell"></i>
  <button class="units">MMGS<svg class="caret up"><use href="#caret"/></svg></button>
  <button class="tag" aria-label="Custom tags"><svg class="ico" viewBox="0 0 18 18" fill="#e4e4e4" stroke="#444"><path d="M1 6l7-4 9 5v5l-6 5L1 11zM1 6l10 6v5M11 12l6-5"/><circle cx="8" cy="6" r="2"/></svg></button>
</footer>
<div class="taskbar-edge"><i></i></div>
</body>
</html>
```
FILE: styles.css
```css
* { box-sizing: border-box; }

:root {
  --face: #f7f7f7;
  --line: #828282;
  --soft: #c6c6c6;
  --tab: #d4d4d4;
}

body {
  margin: 0;
  height: 100vh;
  display: flex;
  flex-direction: column;
  overflow: hidden;
  background: var(--face);
  color: #111;
  font: 11px/13px "Noto Sans", "Open Sans", sans-serif;
}

button, input { font: inherit; color: inherit; border: 0; padding: 0; background: none; }
button { display: flex; align-items: center; justify-content: center; flex: none; white-space: nowrap; }
a { color: inherit; text-decoration: none; }
ul { list-style: none; margin: 0; padding: 0; }
p, h1, h2 { margin: 0; font-size: inherit; }
svg { flex: none; display: block; }
.sprite { position: absolute; width: 0; height: 0; }
.ico { width: 18px; height: 18px; }
.caret, .drop svg { width: 5px; height: 3px; }
.grey { filter: grayscale(1); opacity: .35; }
.line { fill: none; stroke: #c4c4c4; }
.knob { width: 6px; height: 6px; border: 1px solid #888; border-radius: 50%; background: #bbb; }
.divider { width: 1px; background: var(--line); flex: none; }
.grip { width: 3px; flex: none; background: repeating-linear-gradient(#999 0 2px, transparent 2px 4px); }

/* Title bar */
.titlebar {
  display: flex;
  align-items: center;
  flex: none;
  height: 31px;
  padding-left: 10px;
  border-bottom: 1px solid var(--line);
}
.logo {
  position: relative;
  z-index: 5;
  align-self: flex-start;
  display: flex;
  align-items: flex-start;
  width: 145px;
  height: 35px;
  padding-left: 5px;
  gap: 5px;
  flex: none;
  border: 1px solid var(--line);
  border-top: 0;
  background: linear-gradient(135deg, #fff 50%, #d8d8d8);
}
.wordmark { padding-top: 9px; color: #da291c; font-family: "Open Sans", sans-serif; font-size: 16px; line-height: 20px; font-style: italic; }
.wordmark b { font-weight: 800; }
.menu { display: flex; gap: 16px; padding: 0 0 0 28px; color: #111; flex: none; }
.pin { width: 18px; margin-left: 27px; }
.quick { display: flex; align-items: center; height: 30px; margin-left: 6px; padding-left: 13px; border-left: 2px solid #bbb; flex: none; }
.split { position: relative; display: flex; align-items: center; height: 26px; color: #444; }
.split > button { width: 24px; height: 26px; }
.split > .drop { width: 15px; }
.off { color: #aaa; }
.pressed { border: 1px solid var(--line); background: linear-gradient(90deg, #b0b0b0 24px, #fff 24px); }
.pressed > .drop { width: 13px; border-left: 1px solid var(--line); height: 24px; }
.tool { width: 26px; }
.doc-title { flex: 1; padding-left: 2px; text-align: center; font-family: "Open Sans", sans-serif; font-weight: 400; white-space: nowrap; }
.search { display: flex; align-items: center; gap: 3px; width: 202px; height: 23px; padding: 1px 0 1px 5px; border: 1px solid var(--soft); flex: none; color: #777; font-family: "Open Sans", sans-serif; }
.bubble { width: 16px; height: 14px; }
.search input { flex: 1; min-width: 0; height: 19px; padding: 0 0 0 1px; background: #eeeef3; }
.search input::placeholder { color: #555; opacity: 1; }
.search .drop { width: 12px; }
.window-tools { display: flex; align-items: center; flex: none; }
.window-tools button { width: 26px; height: 26px; }
.window-tools svg { width: 14px; height: 14px; }
.window-tools .drop { width: 12px; }
.window-tools .drop svg { width: 5px; height: 3px; }
.window-tools .help { width: 32px; font-size: 18px; font-weight: 700; color: #444; }

.tooltip {
  position: absolute;
  z-index: 20;
  left: 7px;
  top: 37px;
  width: 200px;
  height: 56px;
  padding: 3px 6px;
  border: 1px solid #acacac;
  background: #fff;
  color: #14699b;
  line-height: 15px;
}
.tooltip::before {
  content: "";
  position: absolute;
  left: 14px;
  top: -5px;
  width: 8px;
  height: 8px;
  border: solid #acacac;
  border-width: 1px 0 0 1px;
  background: #fff;
  transform: rotate(45deg);
}
.tooltip strong { display: block; line-height: 16px; color: #0a6296; }

/* Command ribbon */
.commands { display: flex; flex: none; height: 87px; }
.ribbon { display: flex; flex: 1; min-width: 0; border: solid var(--line); border-width: 0 1px 1px 0; }
.group { position: relative; display: grid; padding-right: 1px; }
.group::after { content: ""; position: absolute; right: 0; top: 6px; bottom: 2px; width: 1px; background: var(--soft); }
.group:last-child::after { display: none; }
.g-components { grid-template-columns: 76px 72px 40px 66px 110px 54px 75px; }
.g-show { grid-template-columns: 78px; }
.g-features { grid-template-columns: 60px 60px; }
.g-study { grid-template-columns: 50px; }
.g-bom { grid-template-columns: 59px; }
.g-explode { grid-template-columns: 58px 53px; }
.g-single { grid-template-columns: 62px; }
.g-snapshot { grid-template-columns: 60px 57px; }
.cmd { position: relative; flex-direction: column; justify-content: flex-start; gap: 1px; height: 86px; padding-top: 19px; text-align: center; }
.cmd > svg:first-child { width: 18px; height: 18px; }
.cmd:disabled { color: #b8b8b8; }
.menu-cmd { padding-top: 12px; }
.third-line { padding-top: 64px; }
.cmd > .caret { position: absolute; left: 50%; bottom: 11px; margin-left: -2px; }

.side-bars { display: flex; width: 365px; height: 33px; flex: none; border: 1px solid var(--line); border-left: 0; }
.bar { display: flex; align-items: center; padding-left: 3px; }
.bar button { width: 27px; height: 30px; }
.bar .grip { height: 26px; margin-right: 6px; }
.bar-capture { width: 102px; border-right: 1px solid var(--line); }
.bar-align { flex: 1; }
.bar-align .divider { height: 22px; margin: 0 3px 0 2px; }
.bar .more { width: 22px; }
.more svg { width: 10px; height: 10px; }

/* Document area */
.workspace { display: flex; flex: 1; min-height: 0; }
.document { display: flex; flex-direction: column; flex: 1; min-width: 0; background: #fff; }
.cm-tabs { display: flex; flex: none; height: 22px; font-family: "Open Sans", sans-serif; font-size: 12px; }
.cm-tabs button { height: 22px; padding: 0 7px; border: solid var(--line); border-width: 0 1px 1px 0; background: var(--tab); color: #222; }
.cm-tabs .on { background: var(--face); border-bottom-color: var(--face); font-weight: 600; }
.stage { display: flex; flex: 1; min-height: 0; }

.manager { display: flex; flex-direction: column; width: 247px; flex: none; padding-right: 2px; border-right: 1px solid var(--line); background: var(--face); }
.flyout-bar { display: flex; justify-content: center; align-items: center; height: 16px; margin: 2px 0 4px; border: solid var(--soft); border-width: 1px 0; flex: none; }
.pane-tabs { display: flex; flex: none; height: 26px; border-bottom: 1px solid var(--soft); }
.pane-tabs button { width: 40px; height: 26px; border: 1px solid var(--line); border-left: 0; background: var(--tab); }
.pane-tabs .on { background: var(--face); border-bottom-color: var(--face); }
.pane-tabs .next { flex: 1; border: 0; background: none; justify-content: flex-end; padding-right: 4px; }
.filter { display: flex; align-items: center; gap: 1px; height: 26px; margin-left: 3px; padding-left: 2px; border: 1px solid var(--soft); flex: none; color: #444; }
.filter .caret { margin-top: 6px; }
.filter input { flex: 1; min-width: 0; }
.tree { flex: none; overflow: hidden; white-space: nowrap; }
.tree li { position: relative; display: flex; align-items: center; gap: 5px; height: 22px; padding-left: 25px; }
.tree .root { padding-left: 3px; gap: 4px; }
.tree .hidden-part { color: #808080; }
.tree .parent::before { content: ""; position: absolute; left: 8px; top: 6px; border: 4px solid transparent; border-left-color: #555; border-right: 0; }
.rollback { height: 3px; flex: none; background: linear-gradient(#2f83c6 2px, #1b1bb0 2px); }
.hscroll { display: flex; margin-top: auto; height: 17px; flex: none; background: #f0f0f0; border-bottom: 2px solid var(--face); }
.hscroll button { width: 16px; }
.hscroll svg { width: 8px; height: 10px; }
.track { flex: 1; display: flex; }
.thumb { width: 88%; background: #cdcdcd; }

.canvas { position: relative; flex: 1; min-width: 0; }
.collapse { position: absolute; left: -1px; top: 405px; width: 9px; height: 39px; border: 1px solid var(--line); border-left: 0; background: var(--face); }
.headsup { position: absolute; top: -20px; left: 657px; display: flex; align-items: center; height: 26px; color: #888; }
.headsup button { width: 26px; height: 26px; }
.pair { display: flex; }
.headsup .drop { width: 14px; }
.big-arrow { position: absolute; left: 25px; top: 260px; width: 520px; height: 260px; }
.triad { position: absolute; left: 11px; bottom: 32px; width: 60px; height: 60px; }
.view-name { position: absolute; left: 12px; bottom: 2px; font: 900 14px/16px Lato, sans-serif; }
.pane-rail { position: absolute; right: 0; top: 28px; display: flex; flex-direction: column; border: 1px solid var(--line); border-right: 0; }
.pane-rail button { width: 25px; height: 24px; background: var(--tab); border-bottom: 1px solid var(--line); }
.pane-rail button:last-child { border-bottom: 0; }
.pane-rail .on { background: #fff; }

.model-bar { display: flex; flex: none; height: 15px; padding-left: 25px; border-top: 1px solid var(--line); border-left: 2px solid #9bbcc2; background: var(--face); line-height: 12px; }
.model-bar > button { padding: 0 11px 2px 10px; height: 14px; border-right: 1px solid var(--line); background: var(--tab); }
.model-bar > .on { padding: 0 11px 2px 13px; background: #fff; font-weight: 700; }
.model-bar > button:last-child { padding: 0 17px 2px 10px; }
.steps { display: flex; height: 14px; }
.steps button { width: 16px; border: 1px solid var(--line); background: #aaacb0; }
.steps svg { width: 10px; height: 10px; fill: #85878b; stroke: #85878b; }

/* Task pane */
.task-pane { width: 354px; flex: none; display: flex; flex-direction: column; margin-top: -1px; border-left: 1px solid var(--line); }
.task-pane header { display: flex; align-items: center; height: 20px; padding: 0 3px 0 8px; flex: none; background: #acadb0; border-bottom: 1px solid #111; }
.task-pane h2 { flex: 1; text-align: center; font-weight: 700; }
.pane-tools { display: flex; align-items: center; height: 33px; padding-left: 1px; flex: none; border-bottom: 1px solid var(--soft); color: #666; }
.pane-tools button { width: 27px; height: 26px; }
.pane-tools .drop { width: 16px; }
.library { height: 220px; padding-top: 7px; flex: none; }
.library li { position: relative; display: flex; align-items: center; gap: 6px; height: 22px; padding-left: 27px; }
.library li::before { content: ""; position: absolute; left: 7px; top: 9px; width: 6px; height: 6px; border: solid #999; border-width: 1px 1px 0 0; transform: rotate(45deg); }
.splitter { display: flex; justify-content: center; align-items: center; height: 7px; margin: 0 1px; flex: none; background: linear-gradient(#c9cbd8 1px, #9a9cb0 1px 3px, #d5d7e2 3px 4px, #5f6379 4px 6px, #b9bcc9 6px); }
.drop-zone { height: 60px; margin: 5px; padding-top: 3px; flex: none; border: 1px solid #000; background: #ffff80; text-align: center; }

/* Selection filter toolbar and status bar */
.filter-bar { display: flex; align-items: center; flex: none; height: 34px; padding: 2px 0 0 3px; border-bottom: 1px solid var(--line); }
.filter-bar > button { width: 27px; height: 26px; }
.filter-bar > .grip { height: 26px; margin-right: 7px; }
.filter-bar > .divider { height: 22px; margin: 0 4px 0 3px; }
.filter-bar > .end { height: 31px; margin: 0 0 0 8px; }
.filter-bar .pressed { width: 42px; height: 26px; background: linear-gradient(90deg, #b0b0b0 28px, #fff 28px); }
.wide > button { width: 28px; height: 24px; }
.status { display: flex; align-items: center; flex: none; height: 18px; padding: 0 2px 0 1px; white-space: nowrap; }
.edition { flex: 1; }
.state { margin-right: 7px; }
.cell { align-self: stretch; width: 8px; border-left: 1px solid var(--soft); }
.wide-cell { width: 17px; border-right: 1px solid var(--soft); }
.units { width: 60px; margin: 0 66px 0 32px; justify-content: space-between; }
.up { transform: rotate(180deg); }
.taskbar-edge { display: flex; flex: none; height: 2px; padding-left: 48px; background: #444; }
.taskbar-edge i { width: 287px; background: #e4e4e4; }
```
